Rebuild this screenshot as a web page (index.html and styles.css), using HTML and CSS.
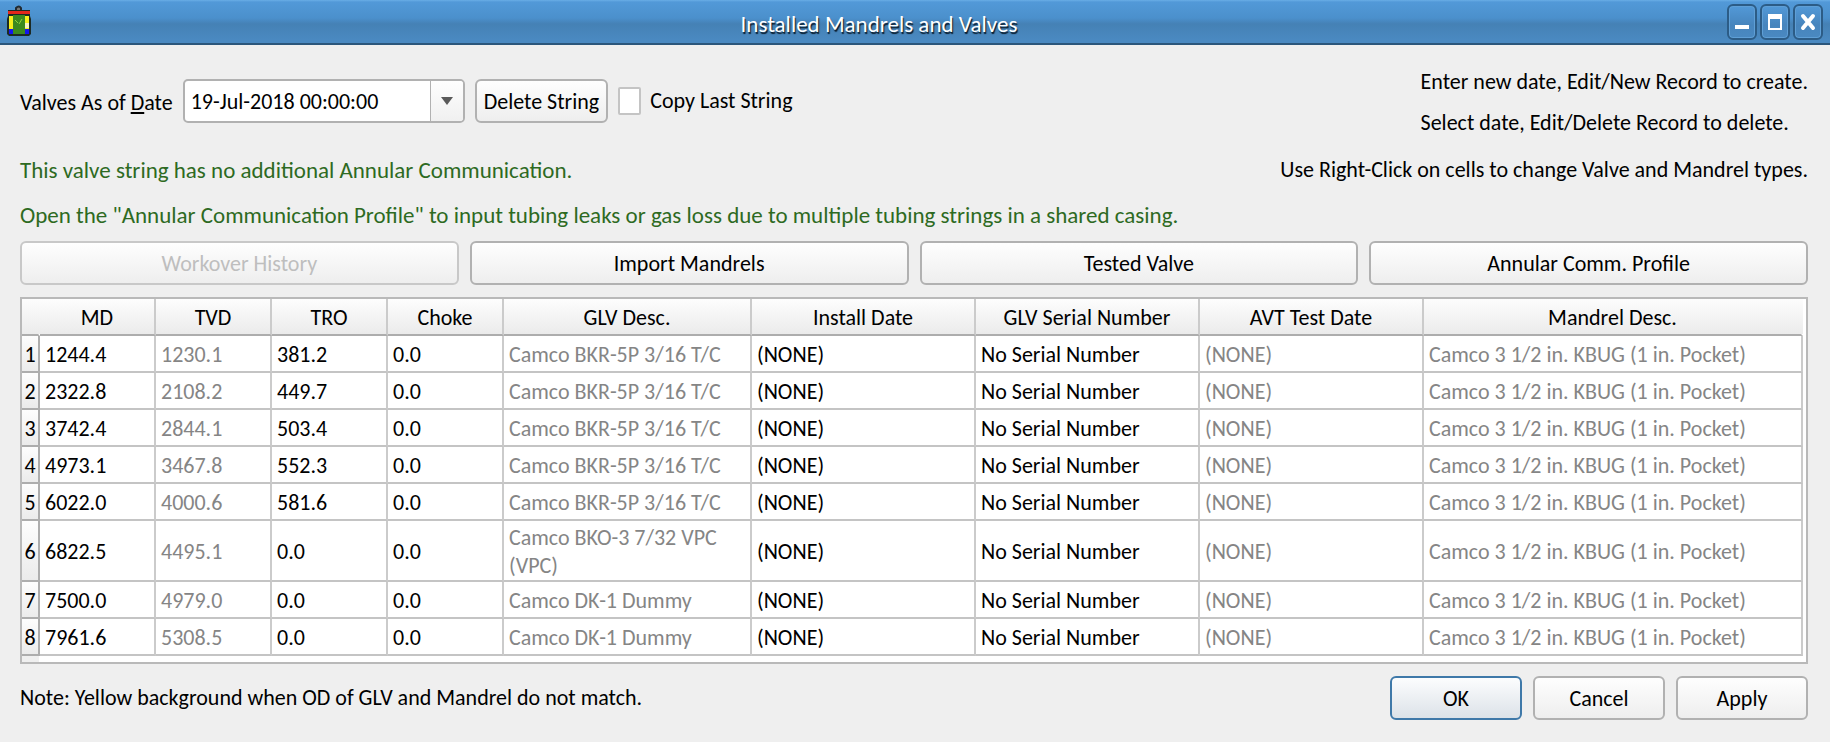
FILE: index.html
```html
<!DOCTYPE html>
<html lang="en">
<head>
<meta charset="utf-8">
<title>Installed Mandrels and Valves</title>
<link rel="stylesheet" href="styles.css">
</head>
<body>
<main class="window">
  <header class="titlebar">
    <svg class="app-icon" viewBox="0 0 24 31" aria-hidden="true">
      <path d="M9 5V2q3-3 5 0v3" fill="#777" stroke="#222b33" stroke-width="2"/>
      <path d="M1 4h22v6l1 3v15l-2 2H2l-2-2V13l1-3z" fill="#1c2a24"/>
      <path d="M2 10h4v14H2zM18 10h4v14h-4z" fill="#f4f01c"/>
      <path d="M18 17h4v5h-4z" fill="#f6f2c0"/>
      <path d="M2 23h4v5H2zM18 23h4v5h-4z" fill="#1414f0"/>
      <path d="M6 9h12v19H6z" fill="#3c8a1e"/>
      <path d="M8 14l3 3M15 13l-3 5" stroke="#8fd23c" stroke-width="1"/>
      <path d="M1 5h22v3H1z" fill="#e3271b"/>
    </svg>
    <h1 class="title">Installed Mandrels and Valves</h1>
    <div class="window-controls">
      <button class="window-button" type="button" aria-label="Minimize">
        <svg class="glyph" viewBox="0 0 16 18"><path d="M1 12h14v4H1z" fill="#fff"/></svg>
      </button>
      <button class="window-button" type="button" aria-label="Maximize">
        <svg class="glyph" viewBox="0 0 16 18"><path d="M1 1h14v16H1zM3 6v9h10V6z" fill="#fff" fill-rule="evenodd"/></svg>
      </button>
      <button class="window-button" type="button" aria-label="Close">
        <svg class="glyph" viewBox="0 0 16 18"><path d="M3 3l10 12M13 3L3 15" stroke="#fff" stroke-width="4" stroke-linecap="round"/></svg>
      </button>
    </div>
  </header>

  <div class="content">
    <section class="top">
      <div class="string-controls">
        <label class="date-label" for="valve-date">Valves As of <u>D</u>ate</label>
        <div class="combo">
          <select id="valve-date" class="combo-select"><option>19-Jul-2018 00:00:00</option></select>
          <span class="combo-arrow"></span>
        </div>
        <button class="button" type="button">Delete String</button>
        <label class="check"><input class="check-box" type="checkbox">Copy Last String</label>
      </div>
      <div class="hints">
        <p>Enter new date, Edit/New Record to create.</p>
        <p>Select date, Edit/Delete Record to delete.</p>
      </div>
    </section>

    <section class="messages">
      <p class="status">This valve string has no additional Annular Communication.</p>
      <p>Use Right-Click on cells to change Valve and Mandrel types.</p>
    </section>
    <p class="status">Open the "Annular Communication Profile" to input tubing leaks or gas loss due to multiple tubing strings in a shared casing.</p>

    <div class="actions">
      <button class="button" type="button" disabled>Workover History</button>
      <button class="button" type="button">Import Mandrels</button>
      <button class="button" type="button">Tested Valve</button>
      <button class="button" type="button">Annular Comm. Profile</button>
    </div>

    <div class="grid-frame">
      <table class="grid">
        <colgroup>
          <col class="col-index"><col class="col-number"><col class="col-number"><col class="col-number"><col class="col-number">
          <col class="col-desc"><col class="col-date"><col class="col-date"><col class="col-date"><col>
        </colgroup>
        <thead>
          <tr><th class="corner"></th><th>MD</th><th>TVD</th><th>TRO</th><th>Choke</th><th>GLV Desc.</th><th>Install Date</th><th>GLV Serial Number</th><th>AVT Test Date</th><th>Mandrel Desc.</th></tr>
        </thead>
        <tbody>
          <tr><th>1</th><td>1244.4</td><td class="locked">1230.1</td><td>381.2</td><td>0.0</td><td class="locked">Camco BKR-5P 3/16 T/C</td><td>(NONE)</td><td>No Serial Number</td><td class="locked">(NONE)</td><td class="locked">Camco 3 1/2 in. KBUG (1 in. Pocket)</td></tr>
          <tr><th>2</th><td>2322.8</td><td class="locked">2108.2</td><td>449.7</td><td>0.0</td><td class="locked">Camco BKR-5P 3/16 T/C</td><td>(NONE)</td><td>No Serial Number</td><td class="locked">(NONE)</td><td class="locked">Camco 3 1/2 in. KBUG (1 in. Pocket)</td></tr>
          <tr><th>3</th><td>3742.4</td><td class="locked">2844.1</td><td>503.4</td><td>0.0</td><td class="locked">Camco BKR-5P 3/16 T/C</td><td>(NONE)</td><td>No Serial Number</td><td class="locked">(NONE)</td><td class="locked">Camco 3 1/2 in. KBUG (1 in. Pocket)</td></tr>
          <tr><th>4</th><td>4973.1</td><td class="locked">3467.8</td><td>552.3</td><td>0.0</td><td class="locked">Camco BKR-5P 3/16 T/C</td><td>(NONE)</td><td>No Serial Number</td><td class="locked">(NONE)</td><td class="locked">Camco 3 1/2 in. KBUG (1 in. Pocket)</td></tr>
          <tr><th>5</th><td>6022.0</td><td class="locked">4000.6</td><td>581.6</td><td>0.0</td><td class="locked">Camco BKR-5P 3/16 T/C</td><td>(NONE)</td><td>No Serial Number</td><td class="locked">(NONE)</td><td class="locked">Camco 3 1/2 in. KBUG (1 in. Pocket)</td></tr>
          <tr><th>6</th><td>6822.5</td><td class="locked">4495.1</td><td>0.0</td><td>0.0</td><td class="locked">Camco BKO-3 7/32 VPC (VPC)</td><td>(NONE)</td><td>No Serial Number</td><td class="locked">(NONE)</td><td class="locked">Camco 3 1/2 in. KBUG (1 in. Pocket)</td></tr>
          <tr><th>7</th><td>7500.0</td><td class="locked">4979.0</td><td>0.0</td><td>0.0</td><td class="locked">Camco DK-1 Dummy</td><td>(NONE)</td><td>No Serial Number</td><td class="locked">(NONE)</td><td class="locked">Camco 3 1/2 in. KBUG (1 in. Pocket)</td></tr>
          <tr><th>8</th><td>7961.6</td><td class="locked">5308.5</td><td>0.0</td><td>0.0</td><td class="locked">Camco DK-1 Dummy</td><td>(NONE)</td><td>No Serial Number</td><td class="locked">(NONE)</td><td class="locked">Camco 3 1/2 in. KBUG (1 in. Pocket)</td></tr>
        </tbody>
      </table>
    </div>

    <footer class="footer">
      <p>Note: Yellow background when OD of GLV and Mandrel do not match.</p>
      <div class="dialog-buttons">
        <button class="button default" type="submit">OK</button>
        <button class="button" type="button">Cancel</button>
        <button class="button" type="button">Apply</button>
      </div>
    </footer>
  </div>
</main>
</body>
</html>
```
FILE: styles.css
```css
* { box-sizing: border-box; }

body {
  margin: 0;
  background: #efefef;
  color: #000;
  font-family: Carlito, Lato, "Open Sans", sans-serif;
  font-size: 22px;
  line-height: 30px;
}

p { margin: 0; }

button, select, input { font: inherit; color: inherit; margin: 0; }

.window { min-height: 100vh; }

.titlebar {
  display: grid;
  grid-template-columns: auto 1fr auto;
  align-items: center;
  height: 45px;
  padding: 0 7px;
  background: linear-gradient(#69aee6 0, #5299d8 2px, #4b90cc 18px, #4581b5 24px, #4a89c1 40px);
  border-bottom: 2px solid #2b567b;
}

.app-icon { width: 24px; height: 31px; overflow: visible; }

.title {
  margin: 0;
  padding-top: 4px;
  font-size: 23px;
  font-weight: 400;
  text-align: center;
  color: #fff;
  text-shadow: 1px 2px 1px #0b1c2b;
}

.window-controls { display: flex; justify-content: flex-end; gap: 3px; }

.window-button {
  display: grid;
  place-items: center;
  width: 30px;
  height: 36px;
  padding: 0;
  background: linear-gradient(#5299d8, #4785bd 60%, #4a89c1);
  border: 2px solid #2c5c86;
  border-radius: 6px;
  box-shadow: inset 0 0 0 1px #5f9fd6;
}

.glyph { width: 16px; height: 18px; }

.content { padding: 19px 22px 20px 20px; }

.top { display: flex; justify-content: space-between; }

.string-controls { display: flex; align-items: center; gap: 10px; height: 74px; }

.date-label { padding-top: 4px; }

.combo {
  display: flex;
  position: relative;
  width: 282px;
  height: 44px;
}

.combo-select {
  appearance: none;
  width: 100%;
  padding: 2px 40px 0 6px;
  border: 2px solid #b1b1b1;
  border-radius: 5px;
  background: #fff;
}

.combo-arrow {
  position: absolute;
  inset: 2px 2px 2px auto;
  width: 33px;
  border-left: 1px solid #b1b1b1;
  border-radius: 0 3px 3px 0;
  background: linear-gradient(#fefefe, #f0f0f0);
  display: grid;
  place-items: center;
  pointer-events: none;
}

.combo-arrow::after {
  content: "";
  border: 6px solid transparent;
  border-top: 8px solid #5a5a5a;
  border-bottom: 0;
}

.button {
  height: 44px;
  padding: 2px 7px 0;
  border: 2px solid #b1b1b1;
  border-radius: 6px;
  background: linear-gradient(#fefefe, #eeeeee);
  white-space: nowrap;
}

.button:disabled { color: #bebebe; border-color: #c8c8c8; }

.button.default {
  border-color: #3f79a9;
  background: linear-gradient(#fcfdfe, #dce2e8);
}

.check { display: flex; align-items: center; gap: 9px; }

.check-box {
  appearance: none;
  width: 23px;
  height: 28px;
  border: 2px solid #c4c4c4;
  border-radius: 2px;
  background: #fff;
}

.check-box:checked { background: #4a89c1; }

.hints { display: grid; row-gap: 11px; padding-top: 3px; }

.messages { display: flex; justify-content: space-between; margin: 17px 0 15px; }

.status { font-size: 23px; color: #2d6a22; }

.actions {
  display: grid;
  grid-template-columns: repeat(4, 1fr);
  gap: 11px;
  margin: 11px 0 12px;
}

.grid-frame {
  padding: 0 3px 6px 0;
  border: 2px solid #b9b9b9;
  background: linear-gradient(to right, #efefef 17px, #fff 17px);
}

.grid {
  width: 100%;
  table-layout: fixed;
  border-collapse: separate;
  border-spacing: 0;
  line-height: 28px;
}

.col-index { width: 18px; }
.col-number { width: 116px; }
.col-desc { width: 248px; }
.col-date { width: 224px; }

.grid th, .grid td {
  height: 37px;
  padding: 3px 5px 0;
  border-right: 2px solid #cbcbcb;
  border-bottom: 2px solid #c4c4c4;
  font-weight: 400;
  text-align: left;
  background: #fff;
}

.grid td.locked { color: #858585; }

.grid th {
  padding: 3px 0 0;
  text-align: center;
  border-bottom-color: #adadad;
  background: linear-gradient(#fdfdfd, #ebebeb);
}

.grid thead th:last-child, .grid thead .corner { border-right-color: transparent; }

.grid tbody th { border-right-color: #adadad; }

.footer {
  display: flex;
  justify-content: space-between;
  align-items: center;
  margin-top: 12px;
}

.dialog-buttons { display: grid; grid-template-columns: repeat(3, 132px); gap: 11px; }
```
